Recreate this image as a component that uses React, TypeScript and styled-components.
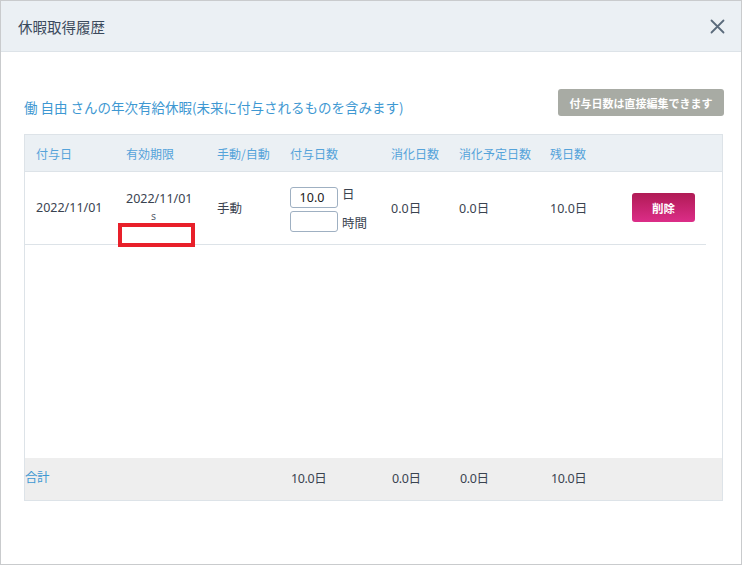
import styled, { createGlobalStyle } from "styled-components";

const GlobalStyle = createGlobalStyle`
  html, body {
    margin: 0;
    padding: 0;
    background: #ffffff;
  }
  body {
    font-family: "Noto Sans", "Noto Sans CJK JP", sans-serif;
  }
`;

const COLS = "90px 91px 73px 101px 68px 91px 82px 85px";

const Dialog = styled.div`
  width: 742px;
  height: 565px;
  box-sizing: border-box;
  border: 1px solid #c9cbcd;
  display: flex;
  flex-direction: column;
  background: #fff;
`;

const Header = styled.div`
  height: 50px;
  flex: none;
  display: flex;
  align-items: center;
  justify-content: space-between;
  padding: 0 15px 0 17px;
  background: #ebf0f4;
  border-bottom: 1px solid #dde3e8;
`;

const Title = styled.h1`
  margin: 0;
  font-size: 14.5px;
  font-weight: 400;
  color: #3b4a5c;
  font-family: "Noto Sans CJK JP", sans-serif;
`;

const CloseButton = styled.button`
  border: none;
  background: none;
  padding: 0;
  width: 18px;
  height: 18px;
  display: flex;
  align-items: center;
  justify-content: center;
  cursor: pointer;
`;

const Body = styled.div`
  padding: 37px 18px 0 23px;
`;

const Toolbar = styled.div`
  display: flex;
  align-items: center;
  justify-content: space-between;
  height: 27px;
  margin-bottom: 18px;
`;

const Subtitle = styled.div`
  font-size: 13.5px;
  color: #3e98d2;
  margin-top: 8px;
  font-family: "Noto Sans CJK JP", sans-serif;
`;

const InfoButton = styled.button`
  height: 27px;
  width: 166px;
  margin-right: -1px;
  border: none;
  border-radius: 3px;
  background: #a8aba4;
  color: #fff;
  font-size: 11px;
  font-weight: 700;
  font-family: "Noto Sans CJK JP", sans-serif;
  padding: 0;
`;

const Table = styled.div`
  border: 1px solid #dde3e8;
`;

const HeadRow = styled.div`
  display: grid;
  grid-template-columns: ${COLS};
  height: 36px;
  align-items: center;
  background: #ebf0f4;
  border-bottom: 1px solid #dde3e8;
`;

const HeadCell = styled.div`
  padding-left: 11px;
  font-size: 12px;
  color: #55a3da;
  font-family: "Noto Sans CJK JP", sans-serif;
`;

const Scroll = styled.div`
  height: 286px;
  background: #fff;
`;

const DataRow = styled.div`
  display: grid;
  grid-template-columns: ${COLS};
  width: 681px;
  height: 72px;
  align-items: center;
  border-bottom: 1px solid #dde3e8;
`;

const Cell = styled.div<{ $top?: boolean }>`
  padding-left: 11px;
  margin-bottom: 4px;
  font-size: 12.5px;
  color: #3a4350;
  font-family: "Noto Sans", "Noto Sans CJK JP", sans-serif;
  ${(p) =>
    p.$top &&
    `
    align-self: stretch;
    margin-bottom: 0;
    padding-top: 18px;
    display: flex;
    flex-direction: column;
    align-items: flex-start;
  `}
`;

const DateLine = styled.span`
  line-height: 18px;
`;

const Tilde = styled.span`
  font-size: 10.5px;
  line-height: 12px;
  margin: 2px 0 0 25px;
  color: #5a6370;
`;

const MarkBox = styled.span`
  display: block;
  width: 77px;
  height: 24px;
  box-sizing: border-box;
  margin: 1px 0 0 -8px;
  border: 4px solid #e8202a;
`;

const GrantCell = styled.div`
  padding-left: 11px;
  display: flex;
  flex-direction: column;
  gap: 3px;
`;

const GrantLine = styled.div`
  display: flex;
  align-items: flex-start;
  gap: 4px;
`;

const NumInput = styled.input`
  width: 48px;
  height: 21px;
  box-sizing: border-box;
  border: 1px solid #9fb0c2;
  border-radius: 3px;
  font-size: 12.5px;
  font-family: "Noto Sans", sans-serif;
  text-align: center;
  color: #222;
  padding: 0 4px 0 0;
  outline: none;
`;

const Unit = styled.span<{ $drop?: boolean }>`
  font-size: 12.5px;
  color: #3a4350;
  line-height: 14px;
  margin-top: ${(p) => (p.$drop ? "5px" : "0")};
  font-family: "Noto Sans CJK JP", sans-serif;
`;

const DeleteButton = styled.button`
  width: 63px;
  height: 29px;
  border: none;
  border-radius: 3px;
  background: linear-gradient(#b01b55, #dc2d88);
  color: #fff;
  font-weight: 700;
  font-size: 11.5px;
  font-family: "Noto Sans CJK JP", sans-serif;
  padding: 0;
`;

const FootRow = styled.div`
  display: grid;
  grid-template-columns: ${COLS};
  height: 41px;
  align-items: center;
  background: #eeeeee;
  border-top: 1px solid #eeeeee;
`;

const FootCell = styled.div<{ $label?: boolean }>`
  padding-left: ${(p) => (p.$label ? "0" : "12px")};
  margin-top: ${(p) => (p.$label ? "-7px" : "-5px")};
  font-size: 12.5px;
  letter-spacing: -0.4px;
  color: ${(p) => (p.$label ? "#3e98d2" : "#3a4350")};
  font-family: "Noto Sans", "Noto Sans CJK JP", sans-serif;
`;

const summary = { grant: "10.0日", used: "0.0日", planned: "0.0日", rest: "10.0日" };

export default function App() {
  return (
    <>
      <GlobalStyle />
      <Dialog>
        <Header>
          <Title>休暇取得履歴</Title>
          <CloseButton aria-label="close">
            <svg width="15" height="15" viewBox="0 0 15 15">
              <path
                d="M1.5 1.5 L13.5 13.5 M13.5 1.5 L1.5 13.5"
                stroke="#5b6b7c"
                strokeWidth="1.8"
                strokeLinecap="round"
              />
            </svg>
          </CloseButton>
        </Header>
        <Body>
          <Toolbar>
            <Subtitle>働 自由 さんの年次有給休暇(未来に付与されるものを含みます)</Subtitle>
            <InfoButton>付与日数は直接編集できます</InfoButton>
          </Toolbar>
          <Table>
            <HeadRow>
              <HeadCell>付与日</HeadCell>
              <HeadCell>有効期限</HeadCell>
              <HeadCell>手動/自動</HeadCell>
              <HeadCell>付与日数</HeadCell>
              <HeadCell>消化日数</HeadCell>
              <HeadCell>消化予定日数</HeadCell>
              <HeadCell>残日数</HeadCell>
              <HeadCell />
            </HeadRow>
            <Scroll>
              <DataRow>
                <Cell>2022/11/01</Cell>
                <Cell $top>
                  <DateLine>2022/11/01</DateLine>
                  <Tilde>s</Tilde>
                  <MarkBox />
                </Cell>
                <Cell>手動</Cell>
                <GrantCell>
                  <GrantLine>
                    <NumInput defaultValue="10.0" />
                    <Unit>日</Unit>
                  </GrantLine>
                  <GrantLine>
                    <NumInput defaultValue="" />
                    <Unit $drop>時間</Unit>
                  </GrantLine>
                </GrantCell>
                <Cell>0.0日</Cell>
                <Cell>0.0日</Cell>
                <Cell>10.0日</Cell>
                <Cell>
                  <DeleteButton>削除</DeleteButton>
                </Cell>
              </DataRow>
            </Scroll>
            <FootRow>
              <FootCell $label>合計</FootCell>
              <FootCell />
              <FootCell />
              <FootCell>{summary.grant}</FootCell>
              <FootCell>{summary.used}</FootCell>
              <FootCell>{summary.planned}</FootCell>
              <FootCell>{summary.rest}</FootCell>
              <FootCell />
            </FootRow>
          </Table>
        </Body>
      </Dialog>
    </>
  );
}
